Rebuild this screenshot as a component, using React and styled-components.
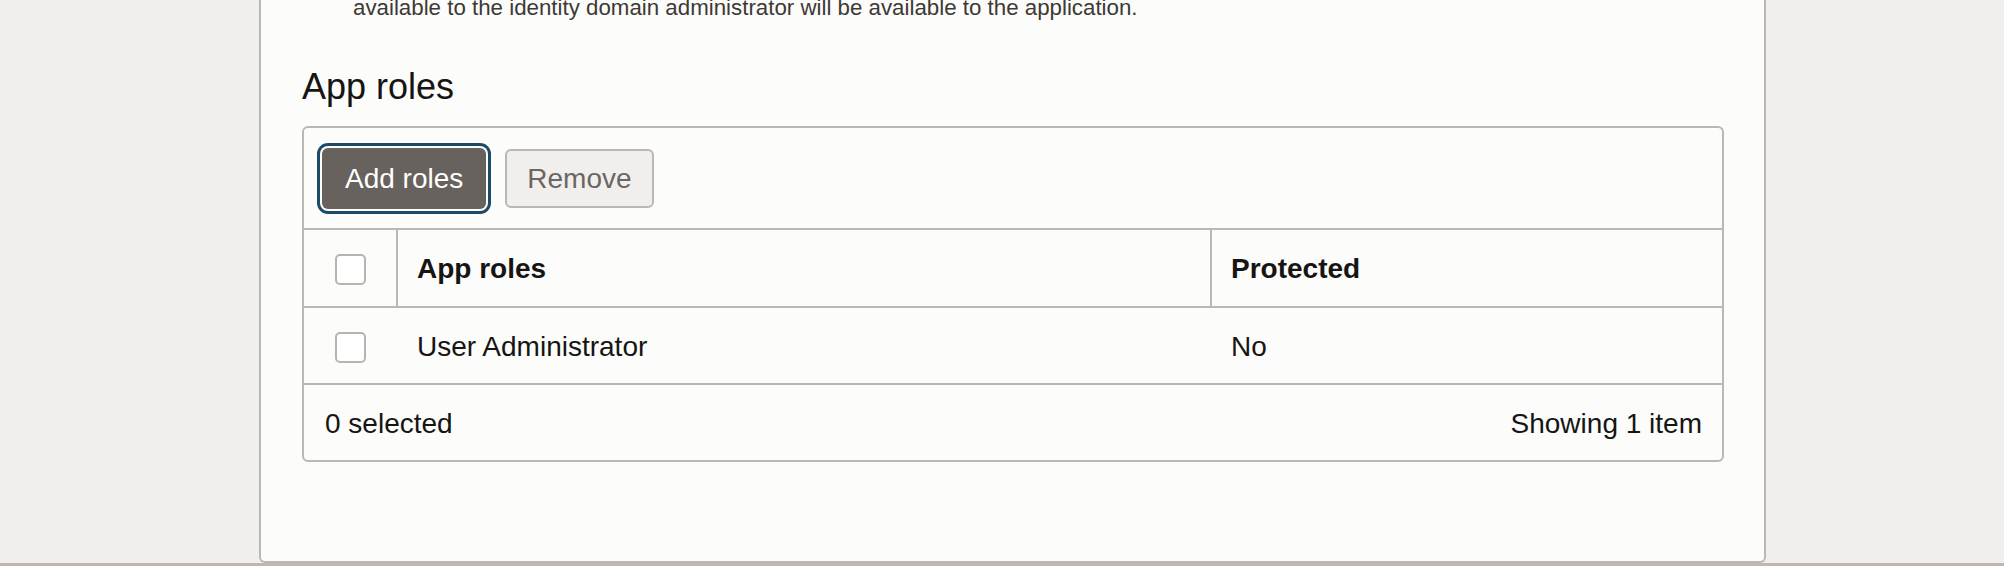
import React from "react";
import styled, { createGlobalStyle } from "styled-components";

const GlobalStyle = createGlobalStyle`
  html, body {
    margin: 0;
    padding: 0;
    background: #f1efed;
    font-family: "Liberation Sans", Arial, sans-serif;
    color: #161513;
  }
  * {
    box-sizing: border-box;
  }
`;

const Page = styled.div`
  display: flex;
  flex-direction: column;
  min-height: 566px;
  overflow: hidden;
`;

const Main = styled.div`
  display: flex;
  padding-left: 259px;
`;

const Panel = styled.section`
  display: flex;
  flex-direction: column;
  width: 1507px;
  padding: 0 40px 99px 41px;
  background: #fcfcfb;
  border: 2px solid #bcb7b1;
  border-top: none;
  border-radius: 0 0 6px 6px;
`;

const Description = styled.p`
  margin: -9px 0 0;
  padding-left: 51px;
  font-size: 22.3px;
  line-height: 33px;
  color: #3d3935;
`;

const Heading = styled.h2`
  margin: 41px 0 18px;
  font-size: 36px;
  line-height: 43px;
  font-weight: 400;
  color: #161513;
`;

const TableCard = styled.div`
  border: 2px solid #bcb7b1;
  border-radius: 6px;
  background: #fcfcfb;
  overflow: hidden;
`;

const Toolbar = styled.div`
  display: flex;
  align-items: center;
  gap: 19px;
  height: 100px;
  padding: 0 18px;
`;

const Button = styled.button`
  font-family: inherit;
  font-size: 28px;
  line-height: 1;
  border-radius: 6px;
  cursor: pointer;
  padding-top: 2px;
  height: ${({ $primary }) => ($primary ? "61px" : "59px")};
  padding-left: ${({ $primary }) => ($primary ? "23px" : "20px")};
  padding-right: ${({ $primary }) => ($primary ? "23px" : "20px")};
  background: ${({ $primary }) => ($primary ? "#67625d" : "#f1efed")};
  color: ${({ $primary }) => ($primary ? "#ffffff" : "#6b6661")};
  border: ${({ $primary }) => ($primary ? "none" : "2px solid #bcb7b1")};
  box-shadow: ${({ $focused }) =>
    $focused ? "0 0 0 2px #fcfcfb, 0 0 0 5px #1d4a66" : "none"};
`;

const Row = styled.div`
  display: grid;
  grid-template-columns: 92px 814px 1fr;
  align-items: stretch;
  height: ${({ $head }) => ($head ? "78px" : "77px")};
  border-top: 2px solid #bcb7b1;
`;

const Cell = styled.div`
  display: flex;
  align-items: center;
  justify-content: ${({ $center }) => ($center ? "center" : "flex-start")};
  padding-top: ${({ $center }) => ($center ? "0" : "2px")};
  padding-left: ${({ $center, $divider }) =>
    $center ? "0" : $divider ? "19px" : "21px"};
  border-left: ${({ $divider }) => ($divider ? "2px solid #bcb7b1" : "none")};
  font-size: 28px;
  font-weight: ${({ $bold }) => ($bold ? 700 : 400)};
  color: #161513;
`;

const Checkbox = styled.span`
  display: block;
  width: 31px;
  height: 31px;
  margin-top: 3px;
  background: #ffffff;
  border: 2px solid #b8b3ae;
  border-radius: 5px;
`;

const Footer = styled.div`
  display: flex;
  align-items: center;
  justify-content: space-between;
  height: 77px;
  padding: 2px 20px 0 21px;
  border-top: 2px solid #bcb7b1;
  font-size: 28px;
  color: #161513;
`;

const BottomRule = styled.div`
  height: 3px;
  background: #bcb7b1;
`;

const roles = [{ name: "User Administrator", protectedRole: "No" }];

export default function App() {
  return (
    <Page>
      <GlobalStyle />
      <Main>
        <Panel>
          <Description>
            available to the identity domain administrator will be available to
            the application.
          </Description>
          <Heading>App roles</Heading>
          <TableCard>
            <Toolbar>
              <Button $primary $focused>
                Add roles
              </Button>
              <Button>Remove</Button>
            </Toolbar>
            <Row $head>
              <Cell $center>
                <Checkbox />
              </Cell>
              <Cell $divider $bold>
                App roles
              </Cell>
              <Cell $divider $bold>
                Protected
              </Cell>
            </Row>
            {roles.map((role) => (
              <Row key={role.name}>
                <Cell $center>
                  <Checkbox />
                </Cell>
                <Cell>{role.name}</Cell>
                <Cell>{role.protectedRole}</Cell>
              </Row>
            ))}
            <Footer>
              <span>0 selected</span>
              <span>Showing {roles.length} item</span>
            </Footer>
          </TableCard>
        </Panel>
      </Main>
      <BottomRule />
    </Page>
  );
}
